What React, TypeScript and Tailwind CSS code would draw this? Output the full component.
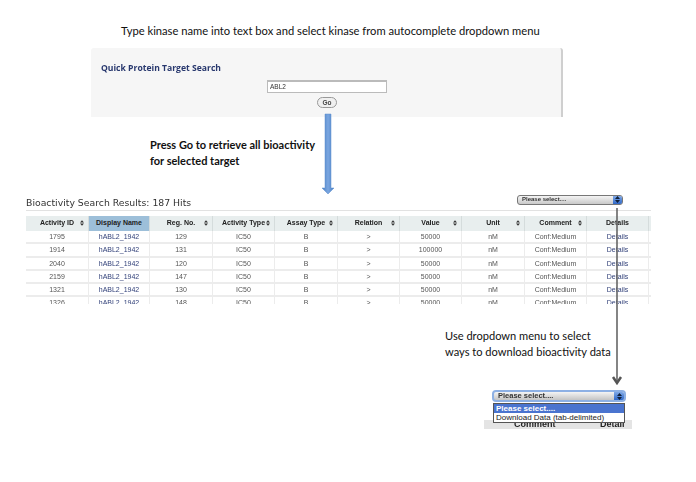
import React from 'react'

const COLS = ['Activity ID', 'Display Name', 'Reg. No.', 'Activity Type', 'Assay Type', 'Relation', 'Value', 'Unit', 'Comment', 'Details']

const ROWS = [
  ['1795', 'hABL2_1942', '129', 'IC50', 'B', '>', '50000', 'nM', 'Conf:Medium', 'Details'],
  ['1914', 'hABL2_1942', '131', 'IC50', 'B', '>', '100000', 'nM', 'Conf:Medium', 'Details'],
  ['2040', 'hABL2_1942', '120', 'IC50', 'B', '>', '50000', 'nM', 'Conf:Medium', 'Details'],
  ['2159', 'hABL2_1942', '147', 'IC50', 'B', '>', '50000', 'nM', 'Conf:Medium', 'Details'],
  ['1321', 'hABL2_1942', '130', 'IC50', 'B', '>', '50000', 'nM', 'Conf:Medium', 'Details'],
  ['1326', 'hABL2_1942', '148', 'IC50', 'B', '>', '50000', 'nM', 'Conf:Medium', 'Details'],
]

const gridCols = 'grid grid-cols-[63px_61px_63px_62px_63px_62px_62px_63px_62px_62px]'

/* up/down sort marker */
function SortMark() {
  return (
    <svg width="4" height="6" viewBox="0 0 5 7" className="absolute right-[4px] top-[4px]">
      <path d="M2.5 0 L5 3 H0 Z M2.5 7 L0 4 H5 Z" fill="#333" />
    </svg>
  )
}

function SelectArrows({ className }: { className: string }) {
  return (
    <span className={`flex items-center justify-center bg-gradient-to-b from-[#7fa8e6] to-[#2f68c8] ${className}`}>
      <svg width="5" height="7" viewBox="0 0 5 7">
        <path d="M2.5 0 L5 3 H0 Z M2.5 7 L0 4 H5 Z" fill="#10203a" />
      </svg>
    </span>
  )
}

function BlueArrow() {
  return (
    <svg width="14" height="84" viewBox="0 0 14 84" className="absolute left-[321px] top-[112px]">
      <defs>
        <linearGradient id="shaft" x1="0" x2="1" y1="0" y2="0">
          <stop offset="0" stopColor="#4a7fc4" />
          <stop offset="0.5" stopColor="#7aa6e0" />
          <stop offset="1" stopColor="#4a7fc4" />
        </linearGradient>
      </defs>
      <path d="M4 2 H10 V76 H13 L7 82 L1 76 H4 Z" fill="url(#shaft)" stroke="#5f8fcc" strokeWidth="0.5" />
    </svg>
  )
}

function GrayArrow() {
  return (
    <svg width="14" height="192" viewBox="0 0 14 192" className="absolute left-[610px] top-[193px]">
      <path d="M7 15 V190" stroke="#666" strokeWidth="1.6" fill="none" />
      <path d="M3 184 L7 190 L11 184" stroke="#555" strokeWidth="2.5" fill="none" />
    </svg>
  )
}

export default function App() {
  return (
    <div className="relative h-[482px] w-[696px] overflow-hidden bg-white font-['Liberation_Sans',sans-serif] text-black">
      <p className="pl-[121px] pt-[24px] font-['Lato',sans-serif] text-[11.2px] leading-[14px] text-[#111]">
        Type kinase name into text box and select kinase from autocomplete dropdown menu
      </p>

      {/* search panel */}
      <div className="ml-[91px] mt-[10px] h-[69px] w-[472px] rounded-t-[3px] border-r-2 border-[#cfcfcf] bg-[#f6f6f6] pl-[10px] pt-[14px] blur-[0.4px]">
        <h2 className="font-['Open_Sans',sans-serif] text-[8.6px] leading-[12px] font-bold text-[#28386e]">
          Quick Protein Target Search
        </h2>
        <div className="mt-[6px] ml-[166px] h-[13px] w-[120px] border border-[#bbb] border-t-2 bg-white pl-[2px] text-[6.5px] leading-[10px] text-[#333]">
          ABL2
        </div>
        <div className="ml-[216px] mt-[4px] flex h-[11px] w-[20px] items-center justify-center rounded-full border border-[#999] bg-[#f0f0f0] text-[6.5px] font-bold text-[#444]">
          Go
        </div>
      </div>

      <p className="pl-[150px] pt-[20px] font-['Lato',sans-serif] text-[11px] leading-[15.5px] font-bold text-[#111]">
        Press Go to retrieve all bioactivity
        <br />
        for selected target
      </p>

      {/* results */}
      <div className="ml-[26px] mt-[26px] w-[625px] blur-[0.4px]">
        <div className="flex h-[17px] items-center justify-between border-b border-[#e2e2e2] pb-[1px]">
          <span className="pt-[2px] font-['DejaVu_Sans',sans-serif] text-[9.3px] text-[#333]">Bioactivity Search Results: 187 Hits</span>
          <div className="mb-[4px] mr-[28px] flex h-[10px] w-[106px] items-center overflow-hidden rounded-[3px] border border-[#777] bg-gradient-to-b from-[#f4f4f4] to-[#c9c9c9]">
            <span className="flex-1 pl-[4px] text-[6px] font-bold text-[#333]">Please select....</span>
            <SelectArrows className="h-full w-[9px]" />
          </div>
        </div>

        <div className="mt-[5px] h-[88px] overflow-hidden">
          <div className={`${gridCols} h-[15px] bg-[#e8eeee] text-[7px] leading-[14px] font-bold text-[#222]`}>
            {COLS.map((c, i) => (
              <div
                key={c}
                className={`relative border-r border-[#d5dcdc] text-center ${i === 1 ? 'bg-[#9dbfd9]' : ''}`}
              >
                {c}
                {i !== 9 && i !== 1 && <SortMark />}
              </div>
            ))}
          </div>
          {ROWS.map((row) => (
            <div key={row[0]} className={`${gridCols} h-[13.3px] border-b-2 border-[#ececec] text-[7px] leading-[12px] text-[#555]`}>
              {row.map((cell, i) => (
                <div
                  key={i}
                  className={`border-r border-[#ececec] text-center ${i === 1 || i === 9 ? 'text-[#33427a]' : ''}`}
                >
                  {cell}
                </div>
              ))}
            </div>
          ))}
        </div>
      </div>

      <p className="pl-[445px] pt-[24px] font-['Lato',sans-serif] text-[11.1px] leading-[15.5px] text-[#111]">
        Use dropdown menu to select
        <br />
        ways to download bioactivity data
      </p>

      {/* dropdown detail */}
      <div className="relative ml-[492px] mt-[31px] w-[134px] blur-[0.4px]">
        <div className="flex h-[12px] items-center overflow-hidden rounded-[4px] border-2 border-[#8db0e4] bg-gradient-to-b from-[#f4f4f4] to-[#c4c4c4]">
          <span className="flex-1 pl-[4px] text-[7.5px] font-bold text-[#333]">Please select....</span>
          <SelectArrows className="h-full w-[10px]" />
        </div>
        <div className="relative z-10 ml-[1px] mt-[1px] w-[132px] border border-[#555] bg-white text-[8px] leading-[9px]">
          <div className="bg-[#4a74cf] pl-[2px] font-bold text-white">Please select....</div>
          <div className="pl-[2px] text-[#222]">Download Data (tab-delimited)</div>
        </div>
        <div className="-ml-[8px] -mt-[3px] flex h-[9px] w-[148px] overflow-hidden bg-[#e4e4e4] pl-[30px] text-[9px] leading-[9px] font-bold text-[#222]">
          <span className="w-[86px]">Comment</span>
          <span>Detail</span>
        </div>
      </div>

      <BlueArrow />
      <GrayArrow />
    </div>
  )
}
